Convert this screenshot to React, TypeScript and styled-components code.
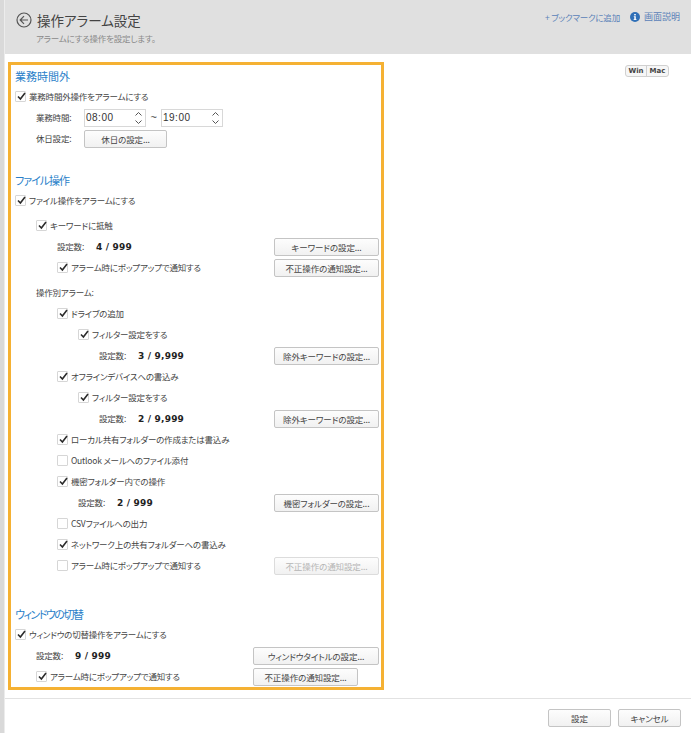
import { createGlobalStyle } from "styled-components";
import styled from "styled-components";

const GlobalStyle = createGlobalStyle`
  html, body {
    margin: 0;
    padding: 0;
    background: #fff;
  }
  body {
    font-family: "Noto Sans CJK JP", "Liberation Sans", sans-serif;
    font-feature-settings: "palt";
    color: #444;
  }
`;

const Page = styled.div`
  width: 691px;
  height: 733px;
  display: flex;
  overflow: hidden;
`;

const SideStrip = styled.div`
  width: 4px;
  flex: none;
  background: #d9d9d9;
  border-right: 1px solid #ececec;
`;

const Main = styled.div`
  flex: 1;
  min-width: 0;
  display: flex;
  flex-direction: column;
`;

const Header = styled.header`
  height: 54px;
  flex: none;
  background: #e0e0e0;
  display: flex;
  justify-content: space-between;
  padding: 12px 11px 0 11px;
  box-sizing: border-box;
`;

const TitleBlock = styled.div`
  display: flex;
  flex-direction: column;
`;

const TitleRow = styled.div`
  display: flex;
  align-items: center;
  gap: 5px;
  height: 16px;
`;

const PageTitle = styled.h1`
  margin: 0;
  font-size: 13.5px;
  font-weight: 400;
  color: #444;
  line-height: 16px;
`;

const PageSub = styled.div`
  font-size: 8.5px;
  letter-spacing: -0.2px;
  color: #8a8a8a;
  margin: 4px 0 0 20px;
  line-height: 12px;
`;

const HeaderLinks = styled.div`
  display: flex;
  align-items: center;
  gap: 10px;
  height: 9px;
  font-size: 9px;
  color: #5b82b8;
`;

const Bookmark = styled.span`
  font-size: 8.5px;
  letter-spacing: -0.2px;
`;

const HelpLink = styled.span`
  display: flex;
  align-items: center;
  gap: 4px;
`;

const Body = styled.div`
  flex: 1;
  min-height: 0;
  display: flex;
  justify-content: space-between;
  align-items: flex-start;
  padding: 8px 22px 0 3px;
`;

const Highlight = styled.section`
  width: 376px;
  height: 628px;
  box-sizing: border-box;
  border: 3px solid #f5b133;
  padding: 1px 0 0 4px;
`;

const SectionTitle = styled.h2<{ $gap?: number; $tight?: number }>`
  margin: ${(p) => p.$gap ?? 0}px 0 0;
  height: 20px;
  font-size: 11px;
  font-weight: 400;
  line-height: 20px;
  letter-spacing: ${(p) => p.$tight ?? 0}px;
  color: #2a7fc9;
`;

/* text sits 1px high in the row, the controls are pushed back with margin-top */
const Row = styled.div<{ $indent?: number; $gap?: number }>`
  height: 21px;
  box-sizing: border-box;
  display: flex;
  align-items: center;
  font-size: 8.5px;
  letter-spacing: -0.2px;
  line-height: 10px;
  padding-left: ${(p) => p.$indent ?? 0}px;
  margin-top: ${(p) => p.$gap ?? 0}px;
  padding-right: 2px;
  padding-bottom: 2px;
  color: #444;
  white-space: nowrap;
`;

const Box = styled.span`
  width: 11px;
  height: 11px;
  box-sizing: border-box;
  flex: none;
  margin: 2px 3px 0 0;
  border: 1px solid #d6d6d6;
  border-radius: 1px;
  background: #fff;
  position: relative;
  svg {
    position: absolute;
    left: 0;
    top: -1px;
  }
`;

const FieldLabel = styled.span<{ $width?: number }>`
  width: ${(p) => (p.$width ? `${p.$width}px` : "auto")};
  flex: none;
`;

const Count = styled.b`
  font-family: "DejaVu Sans", sans-serif;
  font-size: 9px;
  font-weight: 700;
  letter-spacing: 0.2px;
  color: #222;
  margin-top: 2px;
`;

const Button = styled.span<{ $width: number; $disabled?: boolean; $push?: boolean; $mr?: number }>`
  width: ${(p) => p.$width}px;
  height: 18px;
  box-sizing: border-box;
  flex: none;
  display: inline-flex;
  align-items: center;
  justify-content: center;
  margin-top: 2px;
  margin-left: ${(p) => (p.$push ? "auto" : "0")};
  margin-right: ${(p) => p.$mr ?? 0}px;
  border: 1px solid ${(p) => (p.$disabled ? "#dcdcdc" : "#c4c4c4")};
  border-radius: 2px;
  background: linear-gradient(#fdfdfd, #f1f1f1);
  color: ${(p) => (p.$disabled ? "#b5b5b5" : "#444")};
  font-size: 8.5px;
  letter-spacing: -0.1px;
`;

const Spinner = styled.span`
  width: 62px;
  height: 18px;
  box-sizing: border-box;
  flex: none;
  display: flex;
  align-items: center;
  justify-content: space-between;
  margin-top: 2px;
  padding: 0 2px 0 1px;
  border: 1px solid #d8d8d8;
  background: #fff;
  font-family: "Liberation Sans", sans-serif;
  font-size: 10px;
  letter-spacing: 0.5px;
  color: #333;
`;

const Tilde = styled.span`
  width: 15px;
  flex: none;
  text-align: center;
  font-family: "Liberation Sans", sans-serif;
  font-size: 11px;
`;

const OsToggle = styled.div`
  display: flex;
  margin-top: 3px;
  border: 1px solid #d0d0d0;
  border-radius: 3px;
  background: #f6f6f6;
  font-family: "DejaVu Sans", sans-serif;
  font-size: 7px;
  font-weight: 700;
  line-height: 10px;
  color: #444;
`;

const OsOption = styled.span<{ $last?: boolean }>`
  width: 21px;
  box-sizing: border-box;
  text-align: center;
  border-right: ${(p) => (p.$last ? "none" : "1px solid #d0d0d0")};
`;

const Footer = styled.footer`
  height: 35px;
  flex: none;
  box-sizing: border-box;
  border-top: 1px solid #e2e2e2;
  display: flex;
  justify-content: flex-end;
  align-items: flex-start;
  gap: 7px;
  padding: 8px 10px 0 0;
`;

function Check({ on = true }: { on?: boolean }) {
  return (
    <Box>
      {on && (
        <svg width="11" height="11" viewBox="0 0 11 11">
          <path d="M2 5.5 L4.4 8 L9 2" fill="none" stroke="#2b2b2b" strokeWidth="1.6" />
        </svg>
      )}
    </Box>
  );
}

function Arrows() {
  return (
    <svg width="9" height="14" viewBox="0 0 9 14">
      <path d="M1.5 4.5 L4.5 1.5 L7.5 4.5 M1.5 9.5 L4.5 12.5 L7.5 9.5" fill="none" stroke="#555" strokeWidth="1" />
    </svg>
  );
}

function BackIcon() {
  return (
    <svg width="16" height="16" viewBox="0 0 16 16">
      <circle cx="8" cy="8" r="7" fill="none" stroke="#555" strokeWidth="1.2" />
      <path d="M8 4.2 L4.2 8 L8 11.8 M4.4 8 H12" fill="none" stroke="#555" strokeWidth="1.2" />
    </svg>
  );
}

function InfoIcon() {
  return (
    <svg width="10" height="10" viewBox="0 0 10 10">
      <circle cx="5" cy="5" r="5" fill="#2f6fb7" />
      <rect x="4.2" y="2" width="1.6" height="1.4" fill="#fff" />
      <path d="M3.8 4.2 H5.8 V7.2 H6.5 V8 H3.6 V7.2 H4.3 V5 H3.8 Z" fill="#fff" />
    </svg>
  );
}

export default function App() {
  return (
    <Page>
      <GlobalStyle />
      <SideStrip />
      <Main>
        <Header>
          <TitleBlock>
            <TitleRow>
              <BackIcon />
              <PageTitle>操作アラーム設定</PageTitle>
            </TitleRow>
            <PageSub>アラームにする操作を設定します。</PageSub>
          </TitleBlock>
          <HeaderLinks>
            <Bookmark>+ ブックマークに追加</Bookmark>
            <HelpLink>
              <InfoIcon />
              画面説明
            </HelpLink>
          </HeaderLinks>
        </Header>
        <Body>
          <Highlight>
            <SectionTitle>業務時間外</SectionTitle>
            <Row>
              <Check />
              業務時間外操作をアラームにする
            </Row>
            <Row $indent={21}>
              <FieldLabel $width={48}>業務時間:</FieldLabel>
              <Spinner>
                08:00
                <Arrows />
              </Spinner>
              <Tilde>~</Tilde>
              <Spinner>
                19:00
                <Arrows />
              </Spinner>
            </Row>
            <Row $indent={21}>
              <FieldLabel $width={48}>休日設定:</FieldLabel>
              <Button $width={83}>休日の設定...</Button>
            </Row>

            <SectionTitle $gap={21} $tight={-1}>
              ファイル操作
            </SectionTitle>
            <Row>
              <Check />
              ファイル操作をアラームにする
            </Row>
            <Row $indent={21} $gap={4}>
              <Check />
              キーワードに抵触
            </Row>
            <Row $indent={42}>
              <FieldLabel $width={39}>設定数:</FieldLabel>
              <Count>4 / 999</Count>
              <Button $width={105} $push>
                キーワードの設定...
              </Button>
            </Row>
            <Row $indent={42}>
              <Check />
              アラーム時にポップアップで通知する
              <Button $width={105} $push>
                不正操作の通知設定...
              </Button>
            </Row>
            <Row $indent={21} $gap={4}>
              操作別アラーム:
            </Row>
            <Row $indent={42}>
              <Check />
              ドライブの追加
            </Row>
            <Row $indent={63}>
              <Check />
              フィルター設定をする
            </Row>
            <Row $indent={84}>
              <FieldLabel $width={39}>設定数:</FieldLabel>
              <Count>3 / 9,999</Count>
              <Button $width={105} $push>
                除外キーワードの設定...
              </Button>
            </Row>
            <Row $indent={42}>
              <Check />
              オフラインデバイスへの書込み
            </Row>
            <Row $indent={63}>
              <Check />
              フィルター設定をする
            </Row>
            <Row $indent={84}>
              <FieldLabel $width={39}>設定数:</FieldLabel>
              <Count>2 / 9,999</Count>
              <Button $width={105} $push>
                除外キーワードの設定...
              </Button>
            </Row>
            <Row $indent={42}>
              <Check />
              ローカル共有フォルダーの作成または書込み
            </Row>
            <Row $indent={42}>
              <Check on={false} />
              Outlook メールへのファイル添付
            </Row>
            <Row $indent={42}>
              <Check />
              機密フォルダー内での操作
            </Row>
            <Row $indent={63}>
              <FieldLabel $width={39}>設定数:</FieldLabel>
              <Count>2 / 999</Count>
              <Button $width={105} $push>
                機密フォルダーの設定...
              </Button>
            </Row>
            <Row $indent={42}>
              <Check on={false} />
              CSVファイルへの出力
            </Row>
            <Row $indent={42}>
              <Check />
              ネットワーク上の共有フォルダーへの書込み
            </Row>
            <Row $indent={42}>
              <Check on={false} />
              アラーム時にポップアップで通知する
              <Button $width={105} $push $disabled>
                不正操作の通知設定...
              </Button>
            </Row>

            <SectionTitle $gap={28} $tight={-1.5}>
              ウィンドウの切替
            </SectionTitle>
            <Row>
              <Check />
              ウィンドウの切替操作をアラームにする
            </Row>
            <Row $indent={21}>
              <FieldLabel $width={39}>設定数:</FieldLabel>
              <Count>9 / 999</Count>
              <Button $width={126} $push>
                ウィンドウタイトルの設定...
              </Button>
            </Row>
            <Row $indent={21}>
              <Check />
              アラーム時にポップアップで通知する
              <Button $width={105} $push $mr={21}>
                不正操作の通知設定...
              </Button>
            </Row>
          </Highlight>
          <OsToggle>
            <OsOption>Win</OsOption>
            <OsOption $last>Mac</OsOption>
          </OsToggle>
        </Body>
        <Footer>
          <Button $width={63}>設定</Button>
          <Button $width={63}>キャンセル</Button>
        </Footer>
      </Main>
    </Page>
  );
}
